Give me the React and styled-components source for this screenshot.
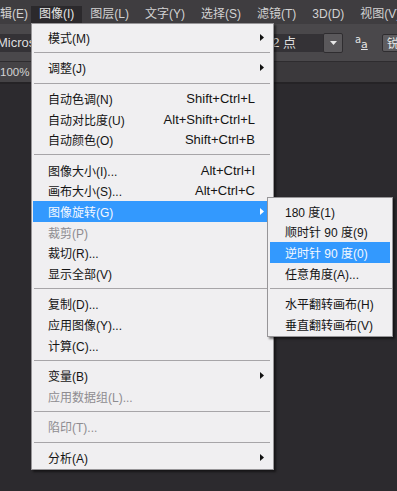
import React from 'react';
import styled, { createGlobalStyle } from 'styled-components';

const GlobalStyle = createGlobalStyle`
  html, body {
    margin: 0;
    padding: 0;
    background: #2c2a2e;
  }
`;

const Screen = styled.div`
  position: relative;
  width: 397px;
  height: 491px;
  overflow: hidden;
  background: #2c2a2e;
  font-family: 'Liberation Sans', 'Noto Sans CJK SC', sans-serif;
  display: flex;
  flex-direction: column;
`;

const MenuBar = styled.div`
  height: 24px;
  flex: none;
  display: flex;
  align-items: flex-end;
  background: #3f3d40;
  white-space: nowrap;
`;

const BarItem = styled.div`
  height: 18px;
  line-height: 17px;
  padding: 0 8px;
  font-size: 12px;
  color: ${(p) => (p.$open ? '#e6e6e6' : '#d2d2d2')};
  background: ${(p) => (p.$open ? '#2b292c' : 'transparent')};
  flex: none;
  &:first-child {
    margin-left: -20px;
    margin-right: -5px;
  }
`;

const OptionsBar = styled.div`
  height: 37px;
  flex: none;
  display: flex;
  align-items: center;
  background: #4a484b;
  border-bottom: 1px solid #2e2c2f;
  white-space: nowrap;
`;

const Field = styled.div`
  height: 18px;
  line-height: 18px;
  width: ${(p) => p.$w}px;
  margin-left: ${(p) => p.$ml || 0}px;
  padding-left: ${(p) => p.$pl || 4}px;
  box-sizing: border-box;
  background: #343236;
  color: #dedede;
  font-size: 13px;
  overflow: hidden;
  flex: none;
`;

const DropButton = styled.div`
  width: 20px;
  height: 20px;
  box-sizing: border-box;
  flex: none;
  background: #5a585b;
  border: 1px solid #2f2d30;
  border-radius: 2px;
  display: flex;
  align-items: center;
  justify-content: center;
`;

const AaIcon = styled.div`
  margin-left: 12px;
  width: 14px;
  height: 18px;
  flex: none;
  position: relative;
  color: #e4e4e4;
  font-family: 'DejaVu Sans', sans-serif;
  span {
    position: absolute;
    line-height: 1;
  }
  span:first-child {
    left: 0;
    top: 1px;
    font-size: 10px;
  }
  span:last-child {
    left: 6px;
    top: 5px;
    font-size: 11px;
    text-decoration: underline;
  }
`;

const SharpButton = styled.div`
  margin-left: 13px;
  width: 60px;
  height: 18px;
  line-height: 18px;
  flex: none;
  box-sizing: border-box;
  padding-left: 4px;
  background: #5e5c5f;
  border: 1px solid #2f2d30;
  border-radius: 2px;
  color: #e8e8e8;
  font-size: 12px;
`;

const TabBar = styled.div`
  height: 20px;
  flex: none;
  display: flex;
  background: #3b393c;
  border-bottom: 2px solid #252326;
  white-space: nowrap;
`;

const DocTab = styled.div`
  width: 120px;
  line-height: 20px;
  background: #454346;
  color: #d4d4d4;
  font-size: 11.5px;
`;

const Canvas = styled.div`
  flex: 1;
  background: #2c2a2e;
`;

const Menu = styled.div`
  position: absolute;
  left: ${(p) => p.$x}px;
  top: ${(p) => p.$y}px;
  width: ${(p) => p.$w}px;
  box-sizing: border-box;
  padding: 3px 0 1px;
  background: #f0eff1;
  border: 1px solid #979598;
  box-shadow: 2px 2px 2px rgba(0, 0, 0, 0.5);
  z-index: ${(p) => p.$z};
`;

const Row = styled.div`
  height: 20.6px;
  display: flex;
  align-items: center;
  margin: ${(p) => p.$margin};
  padding-left: 15px;
  font-size: 12px;
  white-space: nowrap;
  background: ${(p) => (p.$active ? '#3399fe' : 'transparent')};
  color: ${(p) => (p.$active ? '#f4f8ff' : p.$disabled ? '#8e8c90' : '#141414')};
`;

const Shortcut = styled.span`
  margin-left: auto;
  font-size: 13px;
`;

const ArrowSlot = styled.span`
  flex: none;
  width: 13px;
  margin-left: ${(p) => (p.$auto ? 'auto' : '0')};
  display: flex;
  align-items: center;
  padding-left: 5px;
  box-sizing: border-box;
`;

const Separator = styled.div`
  height: 10px;
  margin: ${(p) => p.$margin};
  display: flex;
  align-items: center;
  &::after {
    content: '';
    flex: 1;
    height: 1px;
    background: #a7a5a8;
  }
`;

const mainItems = [
  { label: '模式(M)', sub: true },
  'sep',
  { label: '调整(J)', sub: true },
  'sep',
  { label: '自动色调(N)', key: 'Shift+Ctrl+L' },
  { label: '自动对比度(U)', key: 'Alt+Shift+Ctrl+L' },
  { label: '自动颜色(O)', key: 'Shift+Ctrl+B' },
  'sep',
  { label: '图像大小(I)...', key: 'Alt+Ctrl+I' },
  { label: '画布大小(S)...', key: 'Alt+Ctrl+C' },
  { label: '图像旋转(G)', sub: true, active: true },
  { label: '裁剪(P)', disabled: true },
  { label: '裁切(R)...' },
  { label: '显示全部(V)' },
  'sep',
  { label: '复制(D)...' },
  { label: '应用图像(Y)...' },
  { label: '计算(C)...' },
  'sep',
  { label: '变量(B)', sub: true },
  { label: '应用数据组(L)...', disabled: true },
  'sep',
  { label: '陷印(T)...', disabled: true },
  'sep',
  { label: '分析(A)', sub: true },
];

const rotateItems = [
  { label: '180 度(1)' },
  { label: '顺时针 90 度(9)' },
  { label: '逆时针 90 度(0)', active: true },
  { label: '任意角度(A)...' },
  'sep',
  { label: '水平翻转画布(H)' },
  { label: '垂直翻转画布(V)' },
];

const barItems = ['编辑(E)', '图像(I)', '图层(L)', '文字(Y)', '选择(S)', '滤镜(T)', '3D(D)', '视图(V)'];

function Arrow({ light }) {
  return (
    <svg width="4" height="7" viewBox="0 0 4 7">
      <polygon points="0,0 4,3.5 0,7" fill={light ? '#ffffff' : '#111111'} />
    </svg>
  );
}

function MenuList({ items, rowMargin, sepMargin }) {
  return items.map((item, i) =>
    item === 'sep' ? (
      <Separator key={i} $margin={sepMargin} />
    ) : (
      <Row key={i} $margin={rowMargin} $active={item.active} $disabled={item.disabled}>
        <span>{item.label}</span>
        {item.key && <Shortcut>{item.key}</Shortcut>}
        {(item.key || item.sub) && (
          <ArrowSlot $auto={!item.key}>{item.sub && <Arrow light={item.active} />}</ArrowSlot>
        )}
      </Row>
    )
  );
}

export default function App() {
  return (
    <>
      <GlobalStyle />
      <Screen>
        <MenuBar>
          {barItems.map((t) => (
            <BarItem key={t} $open={t === '图像(I)'}>
              {t}
            </BarItem>
          ))}
        </MenuBar>
        <OptionsBar>
          <Field $w={150} $ml={-6} $pl={3}>Microso</Field>
          <Field $w={80} $ml={8} />
          <Field $w={65} $ml={26} $pl={7}>12 点</Field>
          <DropButton>
            <svg width="7" height="4" viewBox="0 0 7 4">
              <polygon points="0,0 7,0 3.5,4" fill="#e8e8e8" />
            </svg>
          </DropButton>
          <AaIcon>
            <span>a</span>
            <span>a</span>
          </AaIcon>
          <SharpButton>锐利</SharpButton>
        </OptionsBar>
        <TabBar>
          <DocTab>100%</DocTab>
        </TabBar>
        <Canvas />
        <Menu $x={31} $y={23} $w={243} $z={2}>
          <MenuList items={mainItems} rowMargin="0 5px 0 1px" sepMargin="0 3px 0 2px" />
        </Menu>
        <Menu $x={267} $y={197} $w={126} $z={3}>
          <MenuList items={rotateItems} rowMargin="0 2px 0 2px" sepMargin="0 0 0 2px" />
        </Menu>
      </Screen>
    </>
  );
}
